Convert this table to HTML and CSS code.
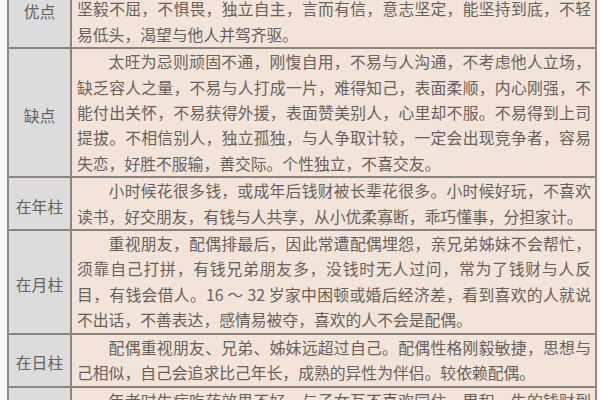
FILE: index.html
```html
<!DOCTYPE html>
<html lang="zh">
<head>
<meta charset="utf-8">
<link rel="stylesheet" href="styles.css">
</head>
<body>
<div class="table">
  <div class="row">
    <div class="label">优点</div>
    <div class="cell">
      <div class="ln first">为人正直，意志坚强，有进取心，个性刚强果决，自尊心强，</div>
      <div class="ln">坚毅不屈，不惧畏，独立自主，言而有信，意志坚定，能坚持到底，不轻</div>
      <div class="ln end">易低头，渴望与他人并驾齐驱。</div>
    </div>
  </div>
  <div class="row">
    <div class="label">缺点</div>
    <div class="cell">
      <div class="ln first">太旺为忌则顽固不通，刚愎自用，不易与人沟通，不考虑他人立场，</div>
      <div class="ln">缺乏容人之量，不易与人打成一片，难得知己，表面柔顺，内心刚强，不</div>
      <div class="ln">能付出关怀，不易获得外援，表面赞美别人，心里却不服。不易得到上司</div>
      <div class="ln">提拔。不相信别人，独立孤独，与人争取计较，一定会出现竞争者，容易</div>
      <div class="ln end">失恋，好胜不服输，善交际。个性独立，不喜交友。</div>
    </div>
  </div>
  <div class="row">
    <div class="label">在年柱</div>
    <div class="cell">
      <div class="ln first">小时候花很多钱，或成年后钱财被长辈花很多。小时候好玩，不喜欢</div>
      <div class="ln end">读书，好交朋友，有钱与人共享，从小优柔寡断，乖巧懂事，分担家计。</div>
    </div>
  </div>
  <div class="row">
    <div class="label">在月柱</div>
    <div class="cell">
      <div class="ln first">重视朋友，配偶排最后，因此常遭配偶埋怨，亲兄弟姊妹不会帮忙，</div>
      <div class="ln">须靠自己打拼，有钱兄弟朋友多，没钱时无人过问，常为了钱财与人反</div>
      <div class="ln">目，有钱会借人。16 ～ 32 岁家中困顿或婚后经济差，看到喜欢的人就说</div>
      <div class="ln end">不出话，不善表达，感情易被夺，喜欢的人不会是配偶。</div>
    </div>
  </div>
  <div class="row">
    <div class="label">在日柱</div>
    <div class="cell">
      <div class="ln first">配偶重视朋友、兄弟、姊妹远超过自己。配偶性格刚毅敏捷，思想与</div>
      <div class="ln end">己相似，自己会追求比己年长，成熟的异性为伴侣。较依赖配偶。</div>
    </div>
  </div>
  <div class="row">
    <div class="label">在时柱</div>
    <div class="cell">
      <div class="ln first">年老时生病吃药效果不好，与子女互不喜欢同住，累积一生的钱财到</div>
      <div class="ln end">老来容易被他人分夺，晚年较为孤独。</div>
    </div>
  </div>
</div>
</body>
</html>
```
FILE: styles.css
```css
html, body {
  margin: 0;
  padding: 0;
  background: #f7f7f7;
  overflow: hidden;
}
.table {
  margin: -31px 0 0 7px;
  width: 586px;
  border: 2px solid #8f8a86;
  font-family: "Noto Sans CJK SC", "Noto Sans", sans-serif;
  color: #67625e;
}
.row {
  display: grid;
  grid-template-columns: 63px 1fr;
  border-top: 2px solid #8a8581;
}
.row:first-child {
  border-top: none;
}
.label {
  background: #dcdcdc;
  border-right: 2px solid #8a8581;
  display: flex;
  align-items: center;
  justify-content: center;
  padding-top: 5px;
  font-size: 15.8px;
}
.cell {
  background: #f2e4d8;
  padding: 0 4px 0 5px;
  font-size: 15.8px;
  line-height: 25.4px;
}
.ln {
  text-align: justify;
  text-align-last: justify;
  white-space: nowrap;
}
.ln.first {
  padding-left: 2em;
}
.ln.end {
  text-align-last: left;
}
```
